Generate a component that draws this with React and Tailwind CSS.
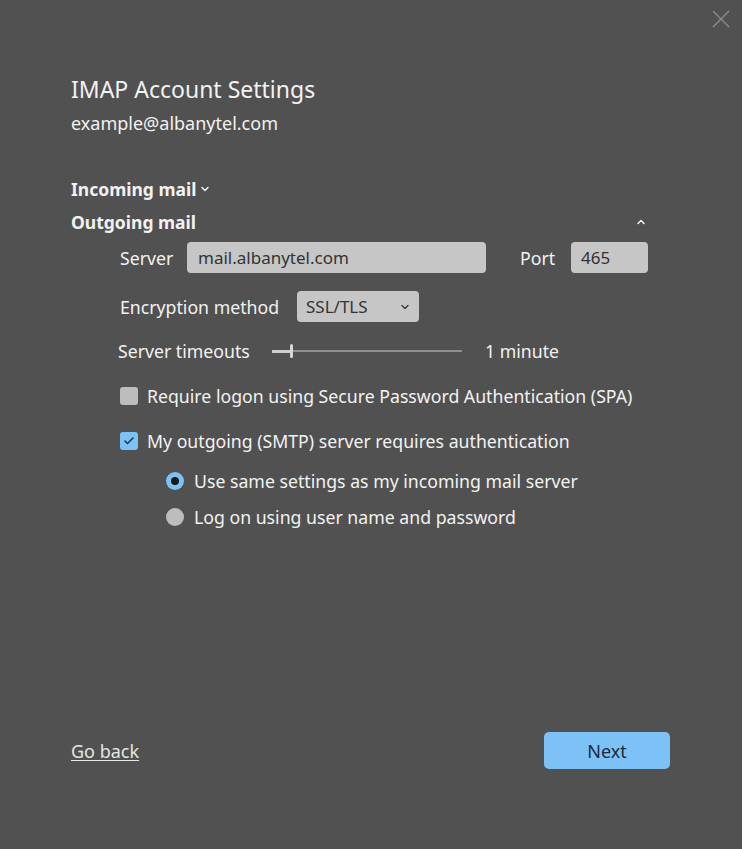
import { Check, ChevronDown, ChevronUp } from 'lucide-react';

const font = { fontFamily: '"Noto Sans", "Open Sans", sans-serif' };

const Checkbox = ({ checked }) => (
  <span
    className={`w-[18px] h-[18px] rounded-[3px] flex items-center justify-center shrink-0
                ${checked ? 'bg-[#7cc2f7]' : 'bg-[#bdbdbd]'}`}
  >
    {checked && <Check className="w-3 h-3 text-[#1f3347]" strokeWidth={3} />}
  </span>
);

const Radio = ({ checked }) => (
  <span
    className={`w-[18px] h-[18px] rounded-full flex items-center justify-center shrink-0
                ${checked ? 'bg-[#7cc2f7]' : 'bg-[#bdbdbd]'}`}
  >
    {checked && <span className="w-2 h-2 rounded-full bg-[#1a1a1a]" />}
  </span>
);

export default function App() {
  return (
    <div className="w-[742px] h-[849px] bg-[#515151] text-[#f2f2f2] relative" style={font}>
      {/* Close */}
      <button className="absolute left-[712px] top-[10px]">
        <svg width="18" height="18" viewBox="0 0 18 18" stroke="#8a8a8a" strokeWidth="1.4">
          <line x1="1" y1="1" x2="17" y2="17" />
          <line x1="17" y1="1" x2="1" y2="17" />
        </svg>
      </button>

      <div className="flex flex-col h-full pl-[71px] pr-[72px]">
        {/* Header */}
        <h1 className="text-[23px] leading-[23px] mt-[78px] font-normal">IMAP Account Settings</h1>
        <p className="text-[18px] leading-[18px] mt-[13px]">example@albanytel.com</p>

        {/* Sections */}
        <div className="mt-[48px] flex items-center gap-[3px] text-[17.5px] font-bold leading-[18px]">
          Incoming mail
          <ChevronDown className="w-3 h-3" strokeWidth={3} />
        </div>
        <div className="mt-[15px] flex items-center justify-between text-[17.5px] font-bold leading-[18px]">
          Outgoing mail
          <ChevronUp className="w-3 h-3 mr-[23px]" strokeWidth={3} />
        </div>

        {/* Outgoing settings */}
        <div className="pl-[49px] flex flex-col text-[17.7px] leading-[24px]">
          <div className="mt-[11px] flex items-center h-[31px]">
            <span className="w-[67px]">Server</span>
            <div className="w-[299px] h-[31px] rounded-[4px] bg-[#c6c6c6] text-[#333] px-[11px] flex items-center text-[17px]">
              mail.albanytel.com
            </div>
            <span className="ml-[34px] w-[51px]">Port</span>
            <div className="w-[77px] h-[31px] rounded-[4px] bg-[#c6c6c6] text-[#333] px-[10px] flex items-center text-[17px]">
              465
            </div>
          </div>

          <div className="mt-[18px] flex items-center h-[31px]">
            <span className="w-[177px]">Encryption method</span>
            <div className="w-[122px] h-[31px] rounded-[4px] bg-[#c6c6c6] text-[#333] pl-[9px] pr-[8px] flex items-center justify-between text-[17px]">
              SSL/TLS
              <ChevronDown className="w-3 h-3" strokeWidth={2.5} />
            </div>
          </div>

          <div className="mt-[17px] flex items-center h-[24px] -ml-[2px]">
            <span className="w-[154px]">Server timeouts</span>
            <div className="w-[190px] h-[14px] flex items-center">
              <span className="w-[18px] h-[3px] bg-[#cfcfcf]" />
              <span className="w-[3px] h-[14px] bg-[#d6d6d6] rounded-sm" />
              <span className="flex-1 h-[2px] bg-[#8e8e8e]" />
            </div>
            <span className="ml-[23px]">1 minute</span>
          </div>

          <label className="mt-[21px] flex items-center h-[24px] gap-[9px]">
            <Checkbox />
            Require logon using Secure Password Authentication (SPA)
          </label>

          <label className="mt-[21px] flex items-center h-[24px] gap-[9px]">
            <Checkbox checked />
            My outgoing (SMTP) server requires authentication
          </label>

          <div className="pl-[46px] flex flex-col">
            <label className="mt-[16px] flex items-center h-[24px] gap-[10px]">
              <Radio checked />
              Use same settings as my incoming mail server
            </label>
            <label className="mt-[12px] flex items-center h-[24px] gap-[10px]">
              <Radio />
              Log on using user name and password
            </label>
          </div>
        </div>

        {/* Footer */}
        <div className="mt-auto mb-[80px] flex items-center justify-between">
          <a className="text-[18px] underline underline-offset-2 text-[#e6e6e6] mt-[2px]">Go back</a>
          <button className="w-[126px] h-[37px] rounded-[5px] bg-[#7cc2f7] text-[#1d2b38] text-[18px] pt-[2px]">
            Next
          </button>
        </div>
      </div>
    </div>
  );
}
